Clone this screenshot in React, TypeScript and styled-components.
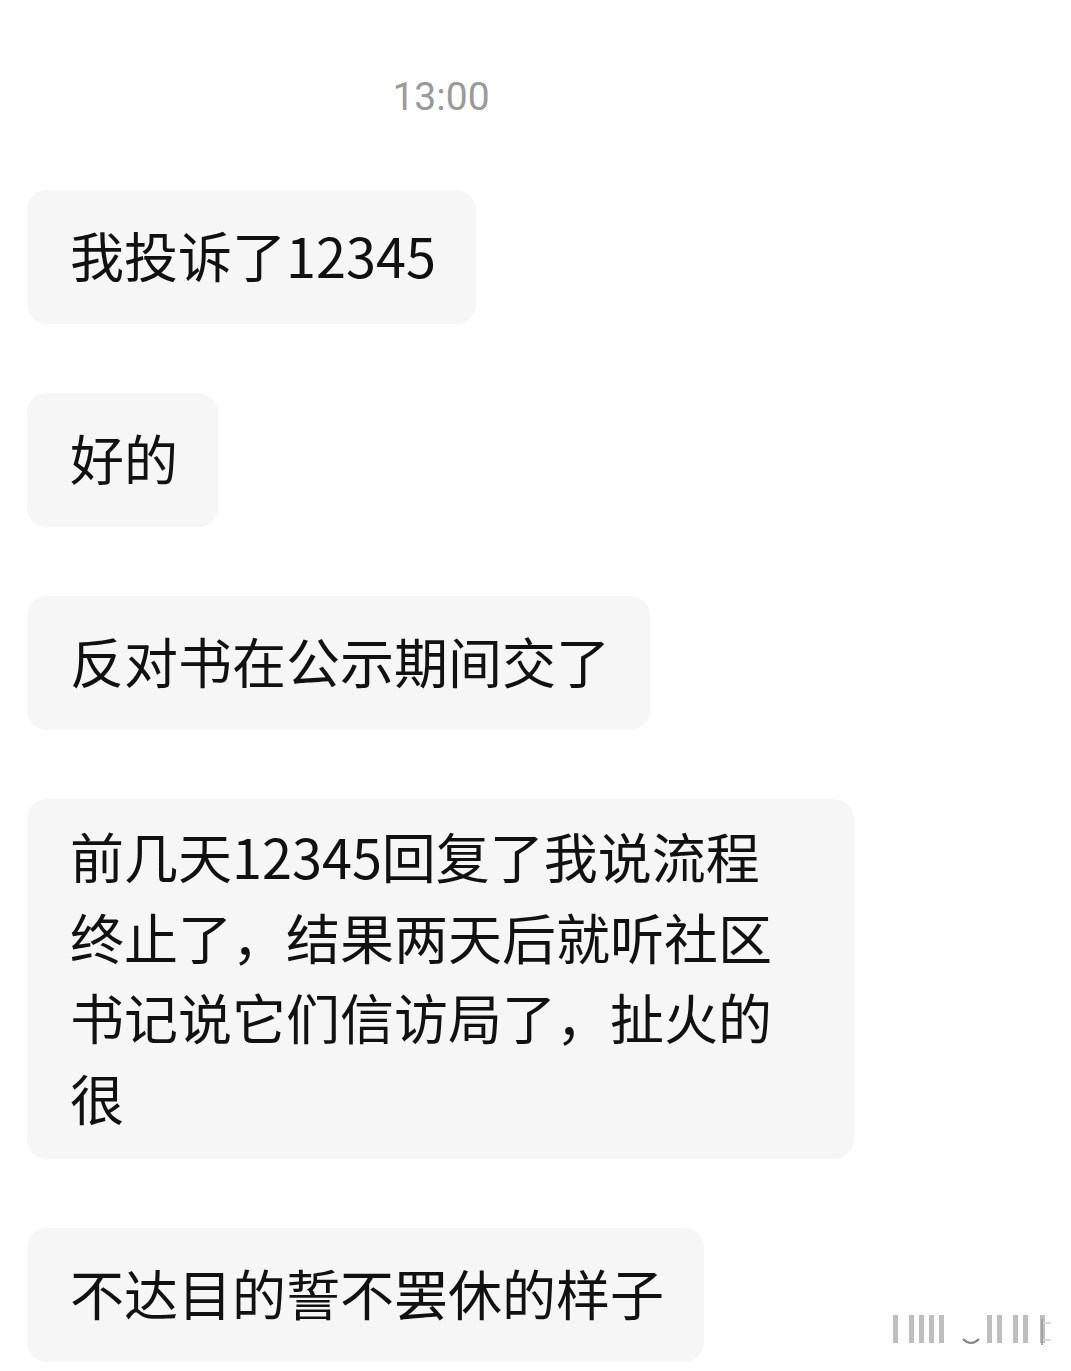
import React from 'react';
import styled, { createGlobalStyle } from 'styled-components';

const GlobalStyle = createGlobalStyle`
  html, body {
    margin: 0;
    padding: 0;
    background: #ffffff;
  }
  body {
    font-family: "Noto Sans CJK SC", "Noto Sans", sans-serif;
  }
`;

const Page = styled.div`
  position: relative;
  width: 1071px;
  height: 1371px;
  overflow: hidden;
  background: #ffffff;
  box-sizing: border-box;
  padding: 73px 0 0 27px;
`;

const Time = styled.div`
  width: 828px;
  text-align: center;
  font-family: Roboto, "Noto Sans", sans-serif;
  font-size: 39px;
  line-height: 48px;
  color: #9a9a9a;
`;

const List = styled.div`
  display: flex;
  flex-direction: column;
  align-items: flex-start;
  gap: 69px;
  margin-top: 69px;
`;

const Bubble = styled.div<{ $wide?: boolean }>`
  box-sizing: border-box;
  display: flex;
  align-items: center;
  min-height: 134px;
  width: ${(p) => (p.$wide ? '827px' : 'auto')};
  padding: 17px 40px 21px 43px;
  background: #f6f6f6;
  border-radius: 20px;
  color: #111111;
  font-size: 54px;
  line-height: 80.5px;
`;

const Text = styled.span`
  max-width: 720px;
`;

const Watermark = styled.svg`
  position: absolute;
  right: 20px;
  bottom: 22px;
  opacity: 0.55;
`;

const messages = [
  '我投诉了12345',
  '好的',
  '反对书在公示期间交了',
  '前几天12345回复了我说流程终止了，结果两天后就听社区书记说它们信访局了，扯火的很',
  '不达目的誓不罢休的样子',
];

const bars = [30, 46, 56, 66, 76, 124, 134, 150, 160, 177];

function App() {
  return (
    <Page>
      <GlobalStyle />
      <Time>13:00</Time>
      <List>
        {messages.map((m) => (
          <Bubble key={m} $wide={m.length > 20}>
            <Text>{m}</Text>
          </Bubble>
        ))}
      </List>
      <Watermark width="180" height="36" viewBox="0 0 180 36">
        {bars.map((x) => (
          <rect key={x} x={x - 8} y="2" width="5" height="28" fill="#8a8a8a" />
        ))}
        <path d="M92 26 Q100 34 108 26" stroke="#222" strokeWidth="2" fill="none" />
        <rect x="170" y="6" width="2" height="26" fill="#555" />
        <rect x="172" y="9" width="8" height="2" fill="#bbb" />
        <rect x="172" y="26" width="8" height="2" fill="#bbb" />
      </Watermark>
    </Page>
  );
}

export default App;
